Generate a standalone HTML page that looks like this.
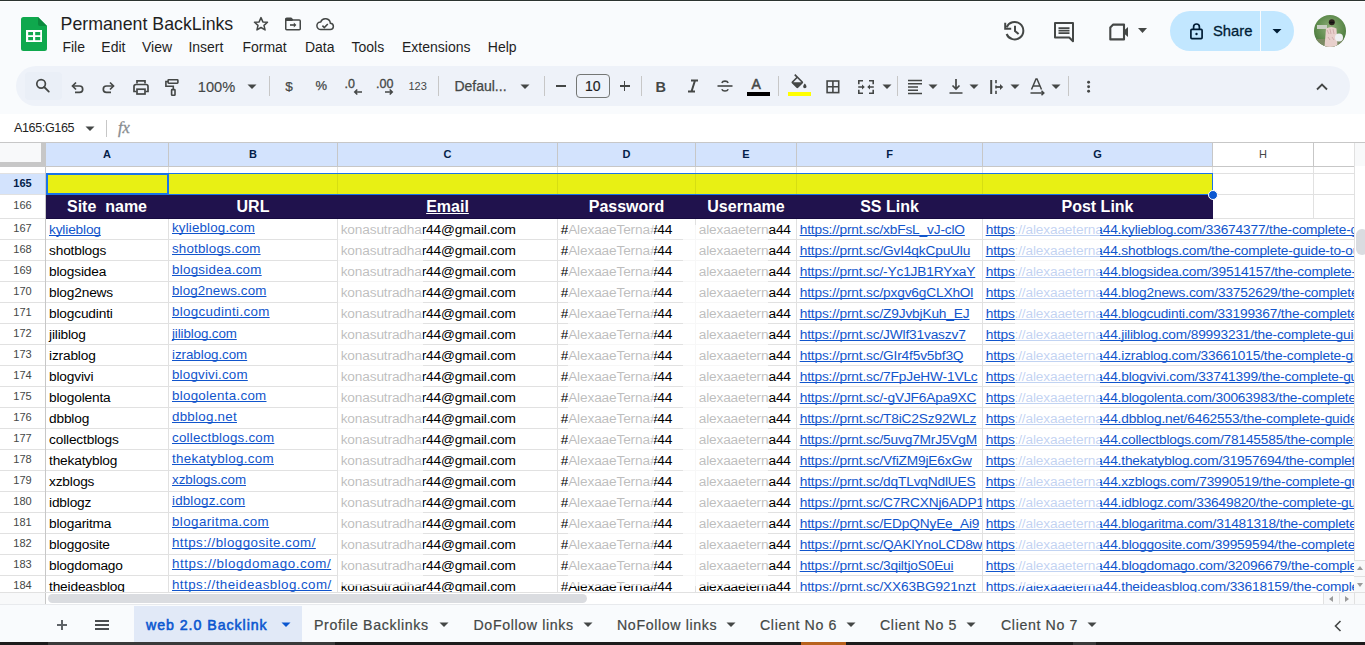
<!DOCTYPE html>
<html><head><meta charset="utf-8"><title>Permanent BackLinks</title><style>
*{margin:0;padding:0;box-sizing:border-box}
html,body{width:1365px;height:645px;overflow:hidden;background:#f9fbfd;font-family:"Liberation Sans",sans-serif;position:relative}
.a{position:absolute;white-space:nowrap}
svg.a{overflow:visible}
</style></head><body>
<div class="a" style="left:0px;top:0px;width:1365px;height:1px;background:#2c3431;"></div>
<div class="a" style="left:0px;top:1px;width:1365px;height:1px;background:#ffffff;"></div>
<svg class="a" style="left:21px;top:17px" width="26" height="34" viewBox="0 0 26 34"><path d="M2.5 0H17l9 9v22.5a2.5 2.5 0 0 1-2.5 2.5h-21A2.5 2.5 0 0 1 0 31.5v-29A2.5 2.5 0 0 1 2.5 0z" fill="#0fa84d"/>
<path d="M17 0l9 9h-7a2 2 0 0 1-2-2z" fill="#0b8a3e"/>
<rect x="5" y="13" width="16" height="12" fill="#fff"/>
<rect x="7.2" y="15" width="4.8" height="3.2" fill="#0fa84d"/><rect x="14.2" y="15" width="5" height="3.2" fill="#0fa84d"/>
<rect x="7.2" y="20" width="4.8" height="3.2" fill="#0fa84d"/><rect x="14.2" y="20" width="5" height="3.2" fill="#0fa84d"/></svg>
<div class="a" style="left:60.6px;top:12.85px;font-size:17.75px;line-height:22px;color:#1f1f1f;font-weight:normal;">Permanent BackLinks</div>
<svg class="a" style="left:253px;top:16px" width="16" height="16" viewBox="0 0 16 16"><path d="M8 1.6l1.85 4.3 4.65.4-3.5 3.05 1.05 4.55L8 11.5l-4.05 2.4L5 9.35 1.5 6.3l4.65-.4z" fill="none" stroke="#444746" stroke-width="1.5" stroke-linejoin="round"/></svg>
<svg class="a" style="left:284px;top:17px" width="18" height="14" viewBox="0 0 18 14"><path d="M1.75 2.2a1 1 0 0 1 1-1h4.2l1.7 1.7h6.6a1 1 0 0 1 1 1v7.9a1 1 0 0 1-1 1H2.75a1 1 0 0 1-1-1z" fill="none" stroke="#444746" stroke-width="1.5"/><path d="M1.75 1.2h5.2l1.7 1.7v1H1.75z" fill="#444746"/><path d="M6 8h4.5" stroke="#444746" stroke-width="1.6"/><path d="M9.8 5.6l2.6 2.4-2.6 2.4z" fill="#444746"/></svg>
<svg class="a" style="left:315px;top:17px" width="20" height="15" viewBox="0 0 20 15"><path d="M5.8 12.6h9.2a3.2 3.2 0 0 0 .35-6.4A5 5 0 0 0 5.7 4.9 3.85 3.85 0 0 0 5.8 12.6z" fill="none" stroke="#444746" stroke-width="1.5"/><path d="M7.4 8.6l1.9 1.9 3.5-3.5" fill="none" stroke="#444746" stroke-width="1.6"/></svg>
<div class="a" style="left:62.4px;top:37.65px;font-size:14px;line-height:18px;color:#1f1f1f;font-weight:normal;">File</div>
<div class="a" style="left:101.3px;top:37.65px;font-size:14px;line-height:18px;color:#1f1f1f;font-weight:normal;">Edit</div>
<div class="a" style="left:142px;top:37.65px;font-size:14px;line-height:18px;color:#1f1f1f;font-weight:normal;">View</div>
<div class="a" style="left:188.4px;top:37.65px;font-size:14px;line-height:18px;color:#1f1f1f;font-weight:normal;">Insert</div>
<div class="a" style="left:242.4px;top:37.65px;font-size:14px;line-height:18px;color:#1f1f1f;font-weight:normal;">Format</div>
<div class="a" style="left:304.9px;top:37.65px;font-size:14px;line-height:18px;color:#1f1f1f;font-weight:normal;">Data</div>
<div class="a" style="left:351.5px;top:37.65px;font-size:14px;line-height:18px;color:#1f1f1f;font-weight:normal;">Tools</div>
<div class="a" style="left:402px;top:37.65px;font-size:14px;line-height:18px;color:#1f1f1f;font-weight:normal;">Extensions</div>
<div class="a" style="left:487.8px;top:37.65px;font-size:14px;line-height:18px;color:#1f1f1f;font-weight:normal;">Help</div>
<svg class="a" style="left:1003px;top:19px" width="24" height="24" viewBox="0 0 24 24"><path d="M3.6 8.4A8.7 8.7 0 1 1 3.6 15" fill="none" stroke="#444746" stroke-width="2"/><path d="M2.2 3.8v6h6" fill="none" stroke="#444746" stroke-width="2"/><path d="M12 6.8v5.2l3.6 3" fill="none" stroke="#444746" stroke-width="2"/></svg>
<svg class="a" style="left:1052px;top:20px" width="24" height="24" viewBox="0 0 24 24"><path d="M3 3h18v14.5h-0v3.8l-3.8-3.8H3z" fill="none" stroke="#444746" stroke-width="2" stroke-linejoin="round"/><path d="M6.5 8.1h11M6.5 10.6h11M6.5 13.1h11" stroke="#444746" stroke-width="1.6"/></svg>
<svg class="a" style="left:1106px;top:20px" width="26" height="24" viewBox="0 0 26 24"><path d="M7.2 4.6h10.8v14.8H4.3V7.5z" fill="none" stroke="#444746" stroke-width="2.1" stroke-linejoin="round"/><path d="M18 10.5l4-3.5v10l-4-3.5z" fill="#444746"/></svg>
<svg class="a" style="left:1138px;top:28px" width="10" height="6" viewBox="0 0 10 6"><path d="M0 0h9L4.5 5z" fill="#444746"/></svg>
<div class="a" style="left:1170px;top:11px;width:124px;height:40px;background:#c2e7ff;border-radius:20px"></div>
<div class="a" style="left:1260px;top:11px;width:1px;height:40px;background:#f9fbfd;"></div>
<svg class="a" style="left:1187px;top:21px" width="20" height="20" viewBox="0 0 20 20"><rect x="3.9" y="8.4" width="11.2" height="9.2" rx="1" fill="none" stroke="#001d35" stroke-width="1.7"/><path d="M6.6 8.4V5.9a2.9 2.9 0 0 1 5.8 0v2.5" fill="none" stroke="#001d35" stroke-width="1.7"/><circle cx="9.5" cy="13" r="1.2" fill="#001d35"/></svg>
<div class="a" style="left:1213px;top:22.37px;font-size:14.8px;line-height:18px;color:#001d35;font-weight:normal;-webkit-text-stroke:0.3px #001d35">Share</div>
<svg class="a" style="left:1272px;top:29px" width="10" height="6" viewBox="0 0 10 6"><path d="M0.5 0h9L5 4.6z" fill="#001d35"/></svg>
<svg class="a" style="left:1314px;top:15px" width="32" height="32" viewBox="0 0 32 32"><defs><clipPath id="av"><circle cx="16" cy="16" r="16"/></clipPath><radialGradient id="avg" cx="0.5" cy="0.4" r="0.7"><stop offset="0" stop-color="#8fae7a"/><stop offset="0.6" stop-color="#5d8a4c"/><stop offset="1" stop-color="#3d6a35"/></radialGradient></defs><g clip-path="url(#av)"><rect width="32" height="32" fill="url(#avg)"/><rect x="3" y="10" width="10" height="4" fill="#c9cfc4"/><rect x="0" y="24" width="32" height="8" fill="#7b8a63"/><circle cx="17.8" cy="7.2" r="3" fill="#2b211c"/><rect x="15.8" y="6.8" width="4" height="1.4" fill="#111"/><path d="M12 13.5q5.5-3 10.5 0l1 18.5H10.5z" fill="#e8d0cc"/><path d="M13 15l2 4M16 14l1 5M19 14l1 5M14 22l2 3M18 22l2 3" stroke="#c9a3a3" stroke-width="0.8"/><circle cx="25" cy="22.5" r="4" fill="#eef1f3"/></g></svg>
<div class="a" style="left:16px;top:66px;width:1334px;height:40px;background:#eef2f9;border-radius:20px"></div>
<div class="a" style="left:25px;top:72px;width:37px;height:28px;background:#eaeff7;border-radius:4px"></div>
<svg class="a" style="left:33px;top:75px" width="20" height="20" viewBox="0 0 20 20"><circle cx="8.1" cy="8.85" r="4.3" fill="none" stroke="#444746" stroke-width="1.7"/><path d="M11.2 12l4.6 4.6" stroke="#444746" stroke-width="1.8" stroke-linecap="round"/></svg>
<svg class="a" style="left:67px;top:75px" width="20" height="20" viewBox="0 0 20 20"><path d="M6 11H12.5a3.2 3.2 0 0 1 0 6.4H8" fill="none" stroke="#444746" stroke-width="1.7"/><path d="M9 7.5L5.5 11 9 14.5" fill="none" stroke="#444746" stroke-width="1.7"/></svg>
<svg class="a" style="left:99px;top:75px" width="20" height="20" viewBox="0 0 20 20"><path d="M14 11H7.5a3.2 3.2 0 0 0 0 6.4H12" fill="none" stroke="#444746" stroke-width="1.7"/><path d="M11 7.5l3.5 3.5L11 14.5" fill="none" stroke="#444746" stroke-width="1.7"/></svg>
<svg class="a" style="left:131px;top:77px" width="20" height="20" viewBox="0 0 20 20"><path d="M6 6.5V3.8h8v2.7" fill="none" stroke="#444746" stroke-width="1.7"/><path d="M5.5 14.5H3V9.5a2 2 0 0 1 2-2h10a2 2 0 0 1 2 2v5h-2.5" fill="none" stroke="#444746" stroke-width="1.7"/><rect x="6" y="12.2" width="8" height="4.8" fill="none" stroke="#444746" stroke-width="1.7"/></svg>
<svg class="a" style="left:163px;top:77px" width="20" height="20" viewBox="0 0 20 20"><rect x="5.1" y="2.8" width="9.8" height="3.4" rx=".6" fill="none" stroke="#444746" stroke-width="1.6"/><path d="M5.1 4.5H2.9V9.3H10.3V12.6" fill="none" stroke="#444746" stroke-width="1.6"/><rect x="8.6" y="12.6" width="3.4" height="5.7" rx=".6" fill="none" stroke="#444746" stroke-width="1.6"/></svg>
<div class="a" style="left:197.8px;top:77.74px;font-size:14.6px;line-height:18px;color:#444746;font-weight:normal;-webkit-text-stroke:0.15px #444746">100%</div>
<svg class="a" style="left:247px;top:84px" width="10" height="6" viewBox="0 0 10 6"><path d="M0.5 0.5h9L5 5z" fill="#444746"/></svg>
<div class="a" style="left:269px;top:76px;width:1px;height:20px;background:#c7c7c7;"></div>
<div class="a" style="left:285.2px;top:77.79px;font-size:13.6px;line-height:17px;color:#444746;font-weight:normal;-webkit-text-stroke:0.2px #444746">$</div>
<div class="a" style="left:315.5px;top:77.50px;font-size:13px;line-height:16px;color:#444746;font-weight:normal;-webkit-text-stroke:0.25px #444746">%</div>
<div class="a" style="left:344.5px;top:75.67px;font-size:12.5px;line-height:16px;color:#444746;font-weight:normal;-webkit-text-stroke:0.3px #444746">.0</div>
<svg class="a" style="left:352.5px;top:88px" width="10" height="8" viewBox="0 0 10 8"><path d="M9 4H1.8M4.3 1.5L1.8 4l2.5 2.5" fill="none" stroke="#444746" stroke-width="1.6"/></svg>
<div class="a" style="left:376px;top:75.67px;font-size:12.5px;line-height:16px;color:#444746;font-weight:normal;-webkit-text-stroke:0.3px #444746">.00</div>
<svg class="a" style="left:383.6px;top:88px" width="10" height="8" viewBox="0 0 10 8"><path d="M1 4h7.2M5.7 1.5L8.2 4 5.7 6.5" fill="none" stroke="#444746" stroke-width="1.6"/></svg>
<div class="a" style="left:408.5px;top:78.99px;font-size:11px;line-height:14px;color:#444746;font-weight:normal;">123</div>
<div class="a" style="left:438px;top:76px;width:1px;height:20px;background:#c7c7c7;"></div>
<div class="a" style="left:454.4px;top:76.65px;font-size:14px;line-height:18px;color:#444746;font-weight:normal;-webkit-text-stroke:0.25px #444746">Defaul...</div>
<svg class="a" style="left:520px;top:84px" width="10" height="6" viewBox="0 0 10 6"><path d="M0.5 0.5h9L5 5z" fill="#444746"/></svg>
<div class="a" style="left:544px;top:76px;width:1px;height:20px;background:#c7c7c7;"></div>
<div class="a" style="left:556px;top:85.2px;width:10px;height:1.7px;background:#444746;"></div>
<div class="a" style="left:576px;top:74px;width:34px;height:24px;background:transparent;border:1px solid #747775;border-radius:4px"></div>
<div class="a" style="left:585px;top:77.15px;font-size:14px;line-height:18px;color:#1f1f1f;font-weight:normal;-webkit-text-stroke:0.2px #1f1f1f">10</div>
<div class="a" style="left:619.5px;top:85.2px;width:10px;height:1.7px;background:#444746;"></div>
<div class="a" style="left:623.65px;top:81px;width:1.7px;height:10px;background:#444746;"></div>
<div class="a" style="left:641px;top:76px;width:1px;height:20px;background:#c7c7c7;"></div>
<div class="a" style="left:655.5px;top:77.98px;font-size:14.5px;line-height:18px;color:#444746;font-weight:bold;">B</div>
<svg class="a" style="left:683px;top:76px" width="20" height="20" viewBox="0 0 20 20"><path d="M8 4.5h7M5 15.5h7M12 4.5L8.5 15.5" fill="none" stroke="#444746" stroke-width="2"/></svg>
<svg class="a" style="left:715px;top:76px" width="20" height="20" viewBox="0 0 20 20"><path d="M2.5 10h15" stroke="#444746" stroke-width="1.6"/><path d="M13.2 6.8A3.4 2.6 0 0 0 6.8 6.8M6.8 13.2a3.4 2.8 0 0 0 6.4 0" fill="none" stroke="#444746" stroke-width="1.6"/></svg>
<div class="a" style="left:751.5px;top:74.65px;font-size:14px;line-height:18px;color:#444746;font-weight:normal;-webkit-text-stroke:0.5px #444746">A</div>
<div class="a" style="left:747px;top:92px;width:23px;height:4px;background:#000000;"></div>
<div class="a" style="left:778px;top:76px;width:1px;height:20px;background:#c7c7c7;"></div>
<svg class="a" style="left:788.5px;top:74px" width="20" height="20" viewBox="0 0 24 24"><path fill-rule="evenodd" d="M16.56 8.94L7.62 0 6.21 1.41l2.38 2.38-5.15 5.15c-.59.59-.59 1.54 0 2.12l5.5 5.5c.29.29.68.44 1.06.44s.77-.15 1.06-.44l5.5-5.5c.59-.58.59-1.53 0-2.12zM5.21 10L10 5.21 14.79 10H5.21zM19 11.5s-2 2.17-2 3.5c0 1.1.9 2 2 2s2-.9 2-2c0-1.33-2-3.5-2-3.5z" fill="#444746"/></svg>
<div class="a" style="left:788px;top:92px;width:23px;height:4px;background:#ffff00;"></div>
<svg class="a" style="left:823px;top:76px" width="20" height="20" viewBox="0 0 20 20"><rect x="4.1" y="5" width="11.6" height="11.6" fill="none" stroke="#444746" stroke-width="1.6"/><path d="M9.9 5v11.6M4.1 10.8h11.6" stroke="#444746" stroke-width="1.6"/></svg>
<svg class="a" style="left:856px;top:76px" width="20" height="20" viewBox="0 0 20 20"><path d="M7 4.8H2.8V8.2M2.8 13.8v3.4H7M13 4.8h4.2V8.2M17.2 13.8v3.4H13" fill="none" stroke="#444746" stroke-width="1.6"/><path d="M2.2 11h4.2M13.6 11h4.2" stroke="#444746" stroke-width="1.6"/><path d="M6 8.4l2.8 2.6L6 13.6zM14 8.4l-2.8 2.6 2.8 2.6z" fill="#444746"/></svg>
<svg class="a" style="left:882px;top:84px" width="10" height="6" viewBox="0 0 10 6"><path d="M0.5 0.5h9L5 5z" fill="#444746"/></svg>
<div class="a" style="left:897px;top:76px;width:1px;height:20px;background:#c7c7c7;"></div>
<svg class="a" style="left:906px;top:76px" width="20" height="20" viewBox="0 0 20 20"><path d="M2 4.5h14M2 7.75h14M2 11h10M2 14.25h10M2 17.5h14" stroke="#444746" stroke-width="1.5"/></svg>
<svg class="a" style="left:928px;top:84px" width="10" height="6" viewBox="0 0 10 6"><path d="M0.5 0.5h9L5 5z" fill="#444746"/></svg>
<svg class="a" style="left:946px;top:76px" width="20" height="20" viewBox="0 0 20 20"><path d="M10 3v10M6.5 9.5l3.5 3.5 3.5-3.5M3.5 17h13" fill="none" stroke="#444746" stroke-width="1.7"/></svg>
<svg class="a" style="left:969px;top:84px" width="10" height="6" viewBox="0 0 10 6"><path d="M0.5 0.5h9L5 5z" fill="#444746"/></svg>
<svg class="a" style="left:986px;top:76px" width="20" height="20" viewBox="0 0 20 20"><path d="M5.2 4v14" stroke="#444746" stroke-width="2"/><path d="M10 4v3.2M10 9.4v3.2M10 14.8v3.2" stroke="#444746" stroke-width="1.6"/><path d="M10 11h5" stroke="#444746" stroke-width="1.8"/><path d="M14 8l3.2 3-3.2 3z" fill="#444746"/></svg>
<svg class="a" style="left:1010px;top:84px" width="10" height="6" viewBox="0 0 10 6"><path d="M0.5 0.5h9L5 5z" fill="#444746"/></svg>
<svg class="a" style="left:1028px;top:76px" width="20" height="20" viewBox="0 0 20 20"><path d="M3.5 13.5L8 3h1l4.5 10.5M5 10h7" fill="none" stroke="#444746" stroke-width="1.5"/><path d="M2.5 17h13M13.5 14.8l2.3 2.2-2.3 2.2" fill="none" stroke="#444746" stroke-width="1.5"/></svg>
<svg class="a" style="left:1051px;top:84px" width="10" height="6" viewBox="0 0 10 6"><path d="M0.5 0.5h9L5 5z" fill="#444746"/></svg>
<div class="a" style="left:1068px;top:76px;width:1px;height:20px;background:#c7c7c7;"></div>
<svg class="a" style="left:1084px;top:78px" width="10" height="18" viewBox="0 0 10 18"><circle cx="4.6" cy="4.3" r="1.45" fill="#444746"/><circle cx="4.6" cy="8.8" r="1.45" fill="#444746"/><circle cx="4.6" cy="13.3" r="1.45" fill="#444746"/></svg>
<svg class="a" style="left:1312px;top:77px" width="20" height="20" viewBox="0 0 20 20"><path d="M5 12.5l5-5 5 5" fill="none" stroke="#444746" stroke-width="1.8"/></svg>
<div class="a" style="left:0px;top:114px;width:1365px;height:28px;background:#ffffff;"></div>
<div class="a" style="left:14px;top:119.63px;font-size:12.6px;line-height:16px;color:#1f1f1f;font-weight:normal;letter-spacing:-0.4px;">A165:G165</div>
<svg class="a" style="left:85px;top:125.5px" width="10" height="6" viewBox="0 0 10 6"><path d="M0.5 0.5h9L5 5z" fill="#444746"/></svg>
<div class="a" style="left:106px;top:120px;width:1px;height:17px;background:#c7c7c7;"></div>
<div class="a" style="left:118px;top:116.78px;font-size:16.5px;line-height:21px;color:#888c90;font-weight:normal;font-family:'Liberation Serif',serif;-webkit-text-stroke:0.3px #888c90"><i>fx</i></div>
<div class="a" style="left:0px;top:142px;width:1365px;height:462px;background:#ffffff;"></div>
<div class="a" style="left:0px;top:142px;width:1365px;height:1px;background:#c7c7c7;"></div>
<div class="a" style="left:46px;top:143px;width:1166px;height:23px;background:#d3e3fd;"></div>
<div class="a" style="left:1354px;top:143px;width:11px;height:23px;background:#f8f9fa;"></div>
<div class="a" style="left:1354px;top:143px;width:1px;height:23px;background:#e1e1e1;"></div>
<div class="a" style="left:0px;top:166px;width:1354px;height:1px;background:#c7c7c7;"></div>
<div class="a" style="left:0px;top:143px;width:41px;height:19px;background:#f8f9fa;"></div>
<div class="a" style="left:41px;top:143px;width:5px;height:23px;background:#c7c7c7;"></div>
<div class="a" style="left:0px;top:162px;width:45px;height:4px;background:#c7c7c7;"></div>
<div class="a" style="left:168px;top:143px;width:1px;height:23px;background:#c7c7c7;"></div>
<div class="a" style="left:337px;top:143px;width:1px;height:23px;background:#c7c7c7;"></div>
<div class="a" style="left:557px;top:143px;width:1px;height:23px;background:#c7c7c7;"></div>
<div class="a" style="left:695px;top:143px;width:1px;height:23px;background:#c7c7c7;"></div>
<div class="a" style="left:796px;top:143px;width:1px;height:23px;background:#c7c7c7;"></div>
<div class="a" style="left:982px;top:143px;width:1px;height:23px;background:#c7c7c7;"></div>
<div class="a" style="left:1212px;top:143px;width:1px;height:23px;background:#c7c7c7;"></div>
<div class="a" style="left:1313px;top:143px;width:1px;height:23px;background:#c7c7c7;"></div>
<div class="a" style="left:46px;top:147px;width:122px;text-align:center;font-size:11px;line-height:14px;color:#041e49;font-weight:bold">A</div>
<div class="a" style="left:169px;top:147px;width:168px;text-align:center;font-size:11px;line-height:14px;color:#041e49;font-weight:bold">B</div>
<div class="a" style="left:338px;top:147px;width:219px;text-align:center;font-size:11px;line-height:14px;color:#041e49;font-weight:bold">C</div>
<div class="a" style="left:558px;top:147px;width:137px;text-align:center;font-size:11px;line-height:14px;color:#041e49;font-weight:bold">D</div>
<div class="a" style="left:696px;top:147px;width:100px;text-align:center;font-size:11px;line-height:14px;color:#041e49;font-weight:bold">E</div>
<div class="a" style="left:797px;top:147px;width:185px;text-align:center;font-size:11px;line-height:14px;color:#041e49;font-weight:bold">F</div>
<div class="a" style="left:983px;top:147px;width:229px;text-align:center;font-size:11px;line-height:14px;color:#041e49;font-weight:bold">G</div>
<div class="a" style="left:1213px;top:147px;width:100px;text-align:center;font-size:11px;line-height:14px;color:#444746;font-weight:normal">H</div>
<div class="a" style="left:45px;top:166px;width:1px;height:426px;background:#c7c7c7;"></div>
<div class="a" style="left:0px;top:173px;width:45px;height:1px;background:#e1e1e1;"></div>
<div class="a" style="left:46px;top:173px;width:1308px;height:1px;background:#e1e1e1;"></div>
<div class="a" style="left:0px;top:194px;width:45px;height:1px;background:#e1e1e1;"></div>
<div class="a" style="left:46px;top:194px;width:1308px;height:1px;background:#e1e1e1;"></div>
<div class="a" style="left:0px;top:218px;width:45px;height:1px;background:#e1e1e1;"></div>
<div class="a" style="left:46px;top:218px;width:1308px;height:1px;background:#e1e1e1;"></div>
<div class="a" style="left:0px;top:239px;width:45px;height:1px;background:#e1e1e1;"></div>
<div class="a" style="left:46px;top:239px;width:1308px;height:1px;background:#e1e1e1;"></div>
<div class="a" style="left:0px;top:260px;width:45px;height:1px;background:#e1e1e1;"></div>
<div class="a" style="left:46px;top:260px;width:1308px;height:1px;background:#e1e1e1;"></div>
<div class="a" style="left:0px;top:281px;width:45px;height:1px;background:#e1e1e1;"></div>
<div class="a" style="left:46px;top:281px;width:1308px;height:1px;background:#e1e1e1;"></div>
<div class="a" style="left:0px;top:302px;width:45px;height:1px;background:#e1e1e1;"></div>
<div class="a" style="left:46px;top:302px;width:1308px;height:1px;background:#e1e1e1;"></div>
<div class="a" style="left:0px;top:323px;width:45px;height:1px;background:#e1e1e1;"></div>
<div class="a" style="left:46px;top:323px;width:1308px;height:1px;background:#e1e1e1;"></div>
<div class="a" style="left:0px;top:344px;width:45px;height:1px;background:#e1e1e1;"></div>
<div class="a" style="left:46px;top:344px;width:1308px;height:1px;background:#e1e1e1;"></div>
<div class="a" style="left:0px;top:365px;width:45px;height:1px;background:#e1e1e1;"></div>
<div class="a" style="left:46px;top:365px;width:1308px;height:1px;background:#e1e1e1;"></div>
<div class="a" style="left:0px;top:386px;width:45px;height:1px;background:#e1e1e1;"></div>
<div class="a" style="left:46px;top:386px;width:1308px;height:1px;background:#e1e1e1;"></div>
<div class="a" style="left:0px;top:407px;width:45px;height:1px;background:#e1e1e1;"></div>
<div class="a" style="left:46px;top:407px;width:1308px;height:1px;background:#e1e1e1;"></div>
<div class="a" style="left:0px;top:428px;width:45px;height:1px;background:#e1e1e1;"></div>
<div class="a" style="left:46px;top:428px;width:1308px;height:1px;background:#e1e1e1;"></div>
<div class="a" style="left:0px;top:449px;width:45px;height:1px;background:#e1e1e1;"></div>
<div class="a" style="left:46px;top:449px;width:1308px;height:1px;background:#e1e1e1;"></div>
<div class="a" style="left:0px;top:470px;width:45px;height:1px;background:#e1e1e1;"></div>
<div class="a" style="left:46px;top:470px;width:1308px;height:1px;background:#e1e1e1;"></div>
<div class="a" style="left:0px;top:491px;width:45px;height:1px;background:#e1e1e1;"></div>
<div class="a" style="left:46px;top:491px;width:1308px;height:1px;background:#e1e1e1;"></div>
<div class="a" style="left:0px;top:512px;width:45px;height:1px;background:#e1e1e1;"></div>
<div class="a" style="left:46px;top:512px;width:1308px;height:1px;background:#e1e1e1;"></div>
<div class="a" style="left:0px;top:533px;width:45px;height:1px;background:#e1e1e1;"></div>
<div class="a" style="left:46px;top:533px;width:1308px;height:1px;background:#e1e1e1;"></div>
<div class="a" style="left:0px;top:554px;width:45px;height:1px;background:#e1e1e1;"></div>
<div class="a" style="left:46px;top:554px;width:1308px;height:1px;background:#e1e1e1;"></div>
<div class="a" style="left:0px;top:575px;width:45px;height:1px;background:#e1e1e1;"></div>
<div class="a" style="left:46px;top:575px;width:1308px;height:1px;background:#e1e1e1;"></div>
<div class="a" style="left:168px;top:167px;width:1px;height:425px;background:#e1e1e1;"></div>
<div class="a" style="left:337px;top:167px;width:1px;height:425px;background:#e1e1e1;"></div>
<div class="a" style="left:557px;top:167px;width:1px;height:425px;background:#e1e1e1;"></div>
<div class="a" style="left:695px;top:167px;width:1px;height:425px;background:#e1e1e1;"></div>
<div class="a" style="left:796px;top:167px;width:1px;height:425px;background:#e1e1e1;"></div>
<div class="a" style="left:982px;top:167px;width:1px;height:425px;background:#e1e1e1;"></div>
<div class="a" style="left:1212px;top:167px;width:1px;height:52px;background:#e1e1e1;"></div>
<div class="a" style="left:1313px;top:167px;width:1px;height:52px;background:#e1e1e1;"></div>
<div class="a" style="left:1354px;top:166px;width:1px;height:426px;background:#e1e1e1;"></div>
<div class="a" style="left:1355px;top:166px;width:10px;height:438px;background:#ffffff;"></div>
<div class="a" style="left:1356px;top:229px;width:12px;height:26px;background:#dadce0;border-radius:6px"></div>
<div class="a" style="left:0px;top:174px;width:45px;height:20px;background:#d3e3fd;"></div>
<div class="a" style="left:0;top:173.4px;width:45px;height:20px;line-height:20px;text-align:center;font-size:11px;color:#041e49;font-weight:bold">165</div>
<div class="a" style="left:0;top:194.4px;width:45px;height:23px;line-height:23px;text-align:center;font-size:11px;color:#444746;font-weight:normal">166</div>
<div class="a" style="left:0;top:218.4px;width:45px;height:20px;line-height:20px;text-align:center;font-size:11px;color:#444746;font-weight:normal">167</div>
<div class="a" style="left:0;top:239.4px;width:45px;height:20px;line-height:20px;text-align:center;font-size:11px;color:#444746;font-weight:normal">168</div>
<div class="a" style="left:0;top:260.4px;width:45px;height:20px;line-height:20px;text-align:center;font-size:11px;color:#444746;font-weight:normal">169</div>
<div class="a" style="left:0;top:281.4px;width:45px;height:20px;line-height:20px;text-align:center;font-size:11px;color:#444746;font-weight:normal">170</div>
<div class="a" style="left:0;top:302.4px;width:45px;height:20px;line-height:20px;text-align:center;font-size:11px;color:#444746;font-weight:normal">171</div>
<div class="a" style="left:0;top:323.4px;width:45px;height:20px;line-height:20px;text-align:center;font-size:11px;color:#444746;font-weight:normal">172</div>
<div class="a" style="left:0;top:344.4px;width:45px;height:20px;line-height:20px;text-align:center;font-size:11px;color:#444746;font-weight:normal">173</div>
<div class="a" style="left:0;top:365.4px;width:45px;height:20px;line-height:20px;text-align:center;font-size:11px;color:#444746;font-weight:normal">174</div>
<div class="a" style="left:0;top:386.4px;width:45px;height:20px;line-height:20px;text-align:center;font-size:11px;color:#444746;font-weight:normal">175</div>
<div class="a" style="left:0;top:407.4px;width:45px;height:20px;line-height:20px;text-align:center;font-size:11px;color:#444746;font-weight:normal">176</div>
<div class="a" style="left:0;top:428.4px;width:45px;height:20px;line-height:20px;text-align:center;font-size:11px;color:#444746;font-weight:normal">177</div>
<div class="a" style="left:0;top:449.4px;width:45px;height:20px;line-height:20px;text-align:center;font-size:11px;color:#444746;font-weight:normal">178</div>
<div class="a" style="left:0;top:470.4px;width:45px;height:20px;line-height:20px;text-align:center;font-size:11px;color:#444746;font-weight:normal">179</div>
<div class="a" style="left:0;top:491.4px;width:45px;height:20px;line-height:20px;text-align:center;font-size:11px;color:#444746;font-weight:normal">180</div>
<div class="a" style="left:0;top:512.4px;width:45px;height:20px;line-height:20px;text-align:center;font-size:11px;color:#444746;font-weight:normal">181</div>
<div class="a" style="left:0;top:533.4px;width:45px;height:20px;line-height:20px;text-align:center;font-size:11px;color:#444746;font-weight:normal">182</div>
<div class="a" style="left:0;top:554.4px;width:45px;height:20px;line-height:20px;text-align:center;font-size:11px;color:#444746;font-weight:normal">183</div>
<div class="a" style="left:0;top:575.4px;width:45px;height:20px;line-height:20px;text-align:center;font-size:11px;color:#444746;font-weight:normal">184</div>
<div class="a" style="left:46px;top:174px;width:1166px;height:20px;background:#e8f014;"></div>
<div class="a" style="left:168px;top:174px;width:1px;height:20px;background:#d6de12;"></div>
<div class="a" style="left:337px;top:174px;width:1px;height:20px;background:#d6de12;"></div>
<div class="a" style="left:557px;top:174px;width:1px;height:20px;background:#d6de12;"></div>
<div class="a" style="left:695px;top:174px;width:1px;height:20px;background:#d6de12;"></div>
<div class="a" style="left:796px;top:174px;width:1px;height:20px;background:#d6de12;"></div>
<div class="a" style="left:982px;top:174px;width:1px;height:20px;background:#d6de12;"></div>
<div class="a" style="left:46px;top:194px;width:1167px;height:25px;background:#20124d;"></div>
<div class="a" style="left:46px;top:218px;width:1167px;height:1px;background:#170b40;"></div>
<div class="a" style="left:46px;top:197px;width:122px;text-align:center;font-size:16px;line-height:20px;color:#fff;font-weight:bold">Site&nbsp; name</div>
<div class="a" style="left:169px;top:197px;width:168px;text-align:center;font-size:16px;line-height:20px;color:#fff;font-weight:bold">URL</div>
<div class="a" style="left:338px;top:197px;width:219px;text-align:center;font-size:16px;line-height:20px;color:#fff;font-weight:bold"><u>Email</u></div>
<div class="a" style="left:558px;top:197px;width:137px;text-align:center;font-size:16px;line-height:20px;color:#fff;font-weight:bold">Password</div>
<div class="a" style="left:696px;top:197px;width:100px;text-align:center;font-size:16px;line-height:20px;color:#fff;font-weight:bold">Username</div>
<div class="a" style="left:797px;top:197px;width:185px;text-align:center;font-size:16px;line-height:20px;color:#fff;font-weight:bold">SS Link</div>
<div class="a" style="left:983px;top:197px;width:229px;text-align:center;font-size:16px;line-height:20px;color:#fff;font-weight:bold">Post Link</div>
<div class="a" style="left:46px;top:173px;width:1167px;height:22px;background:transparent;border:1px solid #1a73e8"></div>
<div class="a" style="left:46px;top:173px;width:123px;height:22px;background:transparent;border:2px solid #1a73e8"></div>
<div class="a" style="left:1208px;top:190px;width:10px;height:10px;border-radius:50%;background:#0b57d0;border:1px solid #fff"></div>
<div class="a" style="left:46px;top:219px;width:122px;height:20px;overflow:hidden"><div class="a" style="left:3px;top:0.5px;font-size:13.7px;letter-spacing:-0.16px;line-height:20px;color:#1155cc;text-decoration-skip-ink:none;text-decoration:underline">kylieblog</div></div>
<div class="a" style="left:168px;top:219px;width:169px;height:21px;overflow:hidden"><div class="a" style="left:4px;top:-1.3px;font-size:13.33px;line-height:20px;color:#1155cc;text-decoration:underline;text-decoration-skip-ink:none;letter-spacing:0.171px">kylieblog.com</div></div>
<div class="a" style="left:337px;top:219px;width:220px;height:20px;overflow:hidden"><div class="a" style="left:3.7px;top:0.5px;font-size:13.7px;letter-spacing:-0.16px;line-height:20px;color:#000;text-decoration-skip-ink:none;">konasutradhar44@gmail.com</div></div>
<div class="a" style="left:557px;top:219px;width:138px;height:20px;overflow:hidden"><div class="a" style="left:3.7px;top:0.5px;font-size:13.7px;letter-spacing:-0.16px;line-height:20px;color:#000;text-decoration-skip-ink:none;">#AlexaaeTerna#44</div></div>
<div class="a" style="left:695px;top:219px;width:101px;height:20px;overflow:hidden"><div class="a" style="left:3.7px;top:0.5px;font-size:13.7px;letter-spacing:-0.16px;line-height:20px;color:#000;text-decoration-skip-ink:none;">alexaaeterna44</div></div>
<div class="a" style="left:796px;top:219px;width:186px;height:20px;overflow:hidden"><div class="a" style="left:3.7px;top:0.5px;font-size:13.7px;letter-spacing:-0.16px;line-height:20px;color:#1155cc;text-decoration-skip-ink:none;text-decoration:underline">https://prnt.sc/xbFsL_vJ-clO</div></div>
<div class="a" style="left:982px;top:219px;width:372px;height:20px;overflow:hidden"><div class="a" style="left:3.7px;top:0.5px;font-size:13.7px;letter-spacing:-0.16px;line-height:20px;color:#1155cc;text-decoration-skip-ink:none;text-decoration:underline">https://alexaaeterna44.kylieblog.com/33674377/the-complete-guide-to</div></div>
<div class="a" style="left:46px;top:240px;width:122px;height:20px;overflow:hidden"><div class="a" style="left:3px;top:0.5px;font-size:13.7px;letter-spacing:-0.16px;line-height:20px;color:#000;text-decoration-skip-ink:none;">shotblogs</div></div>
<div class="a" style="left:168px;top:240px;width:169px;height:21px;overflow:hidden"><div class="a" style="left:4px;top:-1.3px;font-size:13.33px;line-height:20px;color:#1155cc;text-decoration:underline;text-decoration-skip-ink:none;letter-spacing:0.204px">shotblogs.com</div></div>
<div class="a" style="left:337px;top:240px;width:220px;height:20px;overflow:hidden"><div class="a" style="left:3.7px;top:0.5px;font-size:13.7px;letter-spacing:-0.16px;line-height:20px;color:#000;text-decoration-skip-ink:none;">konasutradhar44@gmail.com</div></div>
<div class="a" style="left:557px;top:240px;width:138px;height:20px;overflow:hidden"><div class="a" style="left:3.7px;top:0.5px;font-size:13.7px;letter-spacing:-0.16px;line-height:20px;color:#000;text-decoration-skip-ink:none;">#AlexaaeTerna#44</div></div>
<div class="a" style="left:695px;top:240px;width:101px;height:20px;overflow:hidden"><div class="a" style="left:3.7px;top:0.5px;font-size:13.7px;letter-spacing:-0.16px;line-height:20px;color:#000;text-decoration-skip-ink:none;">alexaaeterna44</div></div>
<div class="a" style="left:796px;top:240px;width:186px;height:20px;overflow:hidden"><div class="a" style="left:3.7px;top:0.5px;font-size:13.7px;letter-spacing:-0.16px;line-height:20px;color:#1155cc;text-decoration-skip-ink:none;text-decoration:underline">https://prnt.sc/GvI4qkCpuUlu</div></div>
<div class="a" style="left:982px;top:240px;width:372px;height:20px;overflow:hidden"><div class="a" style="left:3.7px;top:0.5px;font-size:13.7px;letter-spacing:-0.16px;line-height:20px;color:#1155cc;text-decoration-skip-ink:none;text-decoration:underline">https://alexaaeterna44.shotblogs.com/the-complete-guide-to-our</div></div>
<div class="a" style="left:46px;top:261px;width:122px;height:20px;overflow:hidden"><div class="a" style="left:3px;top:0.5px;font-size:13.7px;letter-spacing:-0.16px;line-height:20px;color:#000;text-decoration-skip-ink:none;">blogsidea</div></div>
<div class="a" style="left:168px;top:261px;width:169px;height:21px;overflow:hidden"><div class="a" style="left:4px;top:-1.3px;font-size:13.33px;line-height:20px;color:#1155cc;text-decoration:underline;text-decoration-skip-ink:none;letter-spacing:0.287px">blogsidea.com</div></div>
<div class="a" style="left:337px;top:261px;width:220px;height:20px;overflow:hidden"><div class="a" style="left:3.7px;top:0.5px;font-size:13.7px;letter-spacing:-0.16px;line-height:20px;color:#000;text-decoration-skip-ink:none;">konasutradhar44@gmail.com</div></div>
<div class="a" style="left:557px;top:261px;width:138px;height:20px;overflow:hidden"><div class="a" style="left:3.7px;top:0.5px;font-size:13.7px;letter-spacing:-0.16px;line-height:20px;color:#000;text-decoration-skip-ink:none;">#AlexaaeTerna#44</div></div>
<div class="a" style="left:695px;top:261px;width:101px;height:20px;overflow:hidden"><div class="a" style="left:3.7px;top:0.5px;font-size:13.7px;letter-spacing:-0.16px;line-height:20px;color:#000;text-decoration-skip-ink:none;">alexaaeterna44</div></div>
<div class="a" style="left:796px;top:261px;width:186px;height:20px;overflow:hidden"><div class="a" style="left:3.7px;top:0.5px;font-size:13.7px;letter-spacing:-0.16px;line-height:20px;color:#1155cc;text-decoration-skip-ink:none;text-decoration:underline">https://prnt.sc/-Yc1JB1RYxaY</div></div>
<div class="a" style="left:982px;top:261px;width:372px;height:20px;overflow:hidden"><div class="a" style="left:3.7px;top:0.5px;font-size:13.7px;letter-spacing:-0.16px;line-height:20px;color:#1155cc;text-decoration-skip-ink:none;text-decoration:underline">https://alexaaeterna44.blogsidea.com/39514157/the-complete-guide</div></div>
<div class="a" style="left:46px;top:282px;width:122px;height:20px;overflow:hidden"><div class="a" style="left:3px;top:0.5px;font-size:13.7px;letter-spacing:-0.16px;line-height:20px;color:#000;text-decoration-skip-ink:none;">blog2news</div></div>
<div class="a" style="left:168px;top:282px;width:169px;height:21px;overflow:hidden"><div class="a" style="left:4px;top:-1.3px;font-size:13.33px;line-height:20px;color:#1155cc;text-decoration:underline;text-decoration-skip-ink:none;letter-spacing:0.14px">blog2news.com</div></div>
<div class="a" style="left:337px;top:282px;width:220px;height:20px;overflow:hidden"><div class="a" style="left:3.7px;top:0.5px;font-size:13.7px;letter-spacing:-0.16px;line-height:20px;color:#000;text-decoration-skip-ink:none;">konasutradhar44@gmail.com</div></div>
<div class="a" style="left:557px;top:282px;width:138px;height:20px;overflow:hidden"><div class="a" style="left:3.7px;top:0.5px;font-size:13.7px;letter-spacing:-0.16px;line-height:20px;color:#000;text-decoration-skip-ink:none;">#AlexaaeTerna#44</div></div>
<div class="a" style="left:695px;top:282px;width:101px;height:20px;overflow:hidden"><div class="a" style="left:3.7px;top:0.5px;font-size:13.7px;letter-spacing:-0.16px;line-height:20px;color:#000;text-decoration-skip-ink:none;">alexaaeterna44</div></div>
<div class="a" style="left:796px;top:282px;width:186px;height:20px;overflow:hidden"><div class="a" style="left:3.7px;top:0.5px;font-size:13.7px;letter-spacing:-0.16px;line-height:20px;color:#1155cc;text-decoration-skip-ink:none;text-decoration:underline">https://prnt.sc/pxgv6gCLXhOl</div></div>
<div class="a" style="left:982px;top:282px;width:372px;height:20px;overflow:hidden"><div class="a" style="left:3.7px;top:0.5px;font-size:13.7px;letter-spacing:-0.16px;line-height:20px;color:#1155cc;text-decoration-skip-ink:none;text-decoration:underline">https://alexaaeterna44.blog2news.com/33752629/the-complete-guide</div></div>
<div class="a" style="left:46px;top:303px;width:122px;height:20px;overflow:hidden"><div class="a" style="left:3px;top:0.5px;font-size:13.7px;letter-spacing:-0.16px;line-height:20px;color:#000;text-decoration-skip-ink:none;">blogcudinti</div></div>
<div class="a" style="left:168px;top:303px;width:169px;height:21px;overflow:hidden"><div class="a" style="left:4px;top:-1.3px;font-size:13.33px;line-height:20px;color:#1155cc;text-decoration:underline;text-decoration-skip-ink:none;letter-spacing:0.335px">blogcudinti.com</div></div>
<div class="a" style="left:337px;top:303px;width:220px;height:20px;overflow:hidden"><div class="a" style="left:3.7px;top:0.5px;font-size:13.7px;letter-spacing:-0.16px;line-height:20px;color:#000;text-decoration-skip-ink:none;">konasutradhar44@gmail.com</div></div>
<div class="a" style="left:557px;top:303px;width:138px;height:20px;overflow:hidden"><div class="a" style="left:3.7px;top:0.5px;font-size:13.7px;letter-spacing:-0.16px;line-height:20px;color:#000;text-decoration-skip-ink:none;">#AlexaaeTerna#44</div></div>
<div class="a" style="left:695px;top:303px;width:101px;height:20px;overflow:hidden"><div class="a" style="left:3.7px;top:0.5px;font-size:13.7px;letter-spacing:-0.16px;line-height:20px;color:#000;text-decoration-skip-ink:none;">alexaaeterna44</div></div>
<div class="a" style="left:796px;top:303px;width:186px;height:20px;overflow:hidden"><div class="a" style="left:3.7px;top:0.5px;font-size:13.7px;letter-spacing:-0.16px;line-height:20px;color:#1155cc;text-decoration-skip-ink:none;text-decoration:underline">https://prnt.sc/Z9JvbjKuh_EJ</div></div>
<div class="a" style="left:982px;top:303px;width:372px;height:20px;overflow:hidden"><div class="a" style="left:3.7px;top:0.5px;font-size:13.7px;letter-spacing:-0.16px;line-height:20px;color:#1155cc;text-decoration-skip-ink:none;text-decoration:underline">https://alexaaeterna44.blogcudinti.com/33199367/the-complete-guide</div></div>
<div class="a" style="left:46px;top:324px;width:122px;height:20px;overflow:hidden"><div class="a" style="left:3px;top:0.5px;font-size:13.7px;letter-spacing:-0.16px;line-height:20px;color:#000;text-decoration-skip-ink:none;">jiliblog</div></div>
<div class="a" style="left:168px;top:324px;width:169px;height:21px;overflow:hidden"><div class="a" style="left:4px;top:0.3999999999999999px;font-size:13.33px;line-height:20px;color:#1155cc;text-decoration:underline;text-decoration-skip-ink:none;letter-spacing:-0.097px">jiliblog.com</div></div>
<div class="a" style="left:337px;top:324px;width:220px;height:20px;overflow:hidden"><div class="a" style="left:3.7px;top:0.5px;font-size:13.7px;letter-spacing:-0.16px;line-height:20px;color:#000;text-decoration-skip-ink:none;">konasutradhar44@gmail.com</div></div>
<div class="a" style="left:557px;top:324px;width:138px;height:20px;overflow:hidden"><div class="a" style="left:3.7px;top:0.5px;font-size:13.7px;letter-spacing:-0.16px;line-height:20px;color:#000;text-decoration-skip-ink:none;">#AlexaaeTerna#44</div></div>
<div class="a" style="left:695px;top:324px;width:101px;height:20px;overflow:hidden"><div class="a" style="left:3.7px;top:0.5px;font-size:13.7px;letter-spacing:-0.16px;line-height:20px;color:#000;text-decoration-skip-ink:none;">alexaaeterna44</div></div>
<div class="a" style="left:796px;top:324px;width:186px;height:20px;overflow:hidden"><div class="a" style="left:3.7px;top:0.5px;font-size:13.7px;letter-spacing:-0.16px;line-height:20px;color:#1155cc;text-decoration-skip-ink:none;text-decoration:underline">https://prnt.sc/JWlf31vaszv7</div></div>
<div class="a" style="left:982px;top:324px;width:372px;height:20px;overflow:hidden"><div class="a" style="left:3.7px;top:0.5px;font-size:13.7px;letter-spacing:-0.16px;line-height:20px;color:#1155cc;text-decoration-skip-ink:none;text-decoration:underline">https://alexaaeterna44.jiliblog.com/89993231/the-complete-guide</div></div>
<div class="a" style="left:46px;top:345px;width:122px;height:20px;overflow:hidden"><div class="a" style="left:3px;top:0.5px;font-size:13.7px;letter-spacing:-0.16px;line-height:20px;color:#000;text-decoration-skip-ink:none;">izrablog</div></div>
<div class="a" style="left:168px;top:345px;width:169px;height:21px;overflow:hidden"><div class="a" style="left:4px;top:0.3999999999999999px;font-size:13.33px;line-height:20px;color:#1155cc;text-decoration:underline;text-decoration-skip-ink:none;letter-spacing:-0.033px">izrablog.com</div></div>
<div class="a" style="left:337px;top:345px;width:220px;height:20px;overflow:hidden"><div class="a" style="left:3.7px;top:0.5px;font-size:13.7px;letter-spacing:-0.16px;line-height:20px;color:#000;text-decoration-skip-ink:none;">konasutradhar44@gmail.com</div></div>
<div class="a" style="left:557px;top:345px;width:138px;height:20px;overflow:hidden"><div class="a" style="left:3.7px;top:0.5px;font-size:13.7px;letter-spacing:-0.16px;line-height:20px;color:#000;text-decoration-skip-ink:none;">#AlexaaeTerna#44</div></div>
<div class="a" style="left:695px;top:345px;width:101px;height:20px;overflow:hidden"><div class="a" style="left:3.7px;top:0.5px;font-size:13.7px;letter-spacing:-0.16px;line-height:20px;color:#000;text-decoration-skip-ink:none;">alexaaeterna44</div></div>
<div class="a" style="left:796px;top:345px;width:186px;height:20px;overflow:hidden"><div class="a" style="left:3.7px;top:0.5px;font-size:13.7px;letter-spacing:-0.16px;line-height:20px;color:#1155cc;text-decoration-skip-ink:none;text-decoration:underline">https://prnt.sc/GIr4f5v5bf3Q</div></div>
<div class="a" style="left:982px;top:345px;width:372px;height:20px;overflow:hidden"><div class="a" style="left:3.7px;top:0.5px;font-size:13.7px;letter-spacing:-0.16px;line-height:20px;color:#1155cc;text-decoration-skip-ink:none;text-decoration:underline">https://alexaaeterna44.izrablog.com/33661015/the-complete-guide</div></div>
<div class="a" style="left:46px;top:366px;width:122px;height:20px;overflow:hidden"><div class="a" style="left:3px;top:0.5px;font-size:13.7px;letter-spacing:-0.16px;line-height:20px;color:#000;text-decoration-skip-ink:none;">blogvivi</div></div>
<div class="a" style="left:168px;top:366px;width:169px;height:21px;overflow:hidden"><div class="a" style="left:4px;top:-1.3px;font-size:13.33px;line-height:20px;color:#1155cc;text-decoration:underline;text-decoration-skip-ink:none;letter-spacing:0.205px">blogvivi.com</div></div>
<div class="a" style="left:337px;top:366px;width:220px;height:20px;overflow:hidden"><div class="a" style="left:3.7px;top:0.5px;font-size:13.7px;letter-spacing:-0.16px;line-height:20px;color:#000;text-decoration-skip-ink:none;">konasutradhar44@gmail.com</div></div>
<div class="a" style="left:557px;top:366px;width:138px;height:20px;overflow:hidden"><div class="a" style="left:3.7px;top:0.5px;font-size:13.7px;letter-spacing:-0.16px;line-height:20px;color:#000;text-decoration-skip-ink:none;">#AlexaaeTerna#44</div></div>
<div class="a" style="left:695px;top:366px;width:101px;height:20px;overflow:hidden"><div class="a" style="left:3.7px;top:0.5px;font-size:13.7px;letter-spacing:-0.16px;line-height:20px;color:#000;text-decoration-skip-ink:none;">alexaaeterna44</div></div>
<div class="a" style="left:796px;top:366px;width:186px;height:20px;overflow:hidden"><div class="a" style="left:3.7px;top:0.5px;font-size:13.7px;letter-spacing:-0.16px;line-height:20px;color:#1155cc;text-decoration-skip-ink:none;text-decoration:underline">https://prnt.sc/7FpJeHW-1VLc</div></div>
<div class="a" style="left:982px;top:366px;width:372px;height:20px;overflow:hidden"><div class="a" style="left:3.7px;top:0.5px;font-size:13.7px;letter-spacing:-0.16px;line-height:20px;color:#1155cc;text-decoration-skip-ink:none;text-decoration:underline">https://alexaaeterna44.blogvivi.com/33741399/the-complete-guide</div></div>
<div class="a" style="left:46px;top:387px;width:122px;height:20px;overflow:hidden"><div class="a" style="left:3px;top:0.5px;font-size:13.7px;letter-spacing:-0.16px;line-height:20px;color:#000;text-decoration-skip-ink:none;">blogolenta</div></div>
<div class="a" style="left:168px;top:387px;width:169px;height:21px;overflow:hidden"><div class="a" style="left:4px;top:-1.3px;font-size:13.33px;line-height:20px;color:#1155cc;text-decoration:underline;text-decoration-skip-ink:none;letter-spacing:0.292px">blogolenta.com</div></div>
<div class="a" style="left:337px;top:387px;width:220px;height:20px;overflow:hidden"><div class="a" style="left:3.7px;top:0.5px;font-size:13.7px;letter-spacing:-0.16px;line-height:20px;color:#000;text-decoration-skip-ink:none;">konasutradhar44@gmail.com</div></div>
<div class="a" style="left:557px;top:387px;width:138px;height:20px;overflow:hidden"><div class="a" style="left:3.7px;top:0.5px;font-size:13.7px;letter-spacing:-0.16px;line-height:20px;color:#000;text-decoration-skip-ink:none;">#AlexaaeTerna#44</div></div>
<div class="a" style="left:695px;top:387px;width:101px;height:20px;overflow:hidden"><div class="a" style="left:3.7px;top:0.5px;font-size:13.7px;letter-spacing:-0.16px;line-height:20px;color:#000;text-decoration-skip-ink:none;">alexaaeterna44</div></div>
<div class="a" style="left:796px;top:387px;width:186px;height:20px;overflow:hidden"><div class="a" style="left:3.7px;top:0.5px;font-size:13.7px;letter-spacing:-0.16px;line-height:20px;color:#1155cc;text-decoration-skip-ink:none;text-decoration:underline">https://prnt.sc/-gVJF6Apa9XC</div></div>
<div class="a" style="left:982px;top:387px;width:372px;height:20px;overflow:hidden"><div class="a" style="left:3.7px;top:0.5px;font-size:13.7px;letter-spacing:-0.16px;line-height:20px;color:#1155cc;text-decoration-skip-ink:none;text-decoration:underline">https://alexaaeterna44.blogolenta.com/30063983/the-complete-guide</div></div>
<div class="a" style="left:46px;top:408px;width:122px;height:20px;overflow:hidden"><div class="a" style="left:3px;top:0.5px;font-size:13.7px;letter-spacing:-0.16px;line-height:20px;color:#000;text-decoration-skip-ink:none;">dbblog</div></div>
<div class="a" style="left:168px;top:408px;width:169px;height:21px;overflow:hidden"><div class="a" style="left:4px;top:-1.3px;font-size:13.33px;line-height:20px;color:#1155cc;text-decoration:underline;text-decoration-skip-ink:none;letter-spacing:0.271px">dbblog.net</div></div>
<div class="a" style="left:337px;top:408px;width:220px;height:20px;overflow:hidden"><div class="a" style="left:3.7px;top:0.5px;font-size:13.7px;letter-spacing:-0.16px;line-height:20px;color:#000;text-decoration-skip-ink:none;">konasutradhar44@gmail.com</div></div>
<div class="a" style="left:557px;top:408px;width:138px;height:20px;overflow:hidden"><div class="a" style="left:3.7px;top:0.5px;font-size:13.7px;letter-spacing:-0.16px;line-height:20px;color:#000;text-decoration-skip-ink:none;">#AlexaaeTerna#44</div></div>
<div class="a" style="left:695px;top:408px;width:101px;height:20px;overflow:hidden"><div class="a" style="left:3.7px;top:0.5px;font-size:13.7px;letter-spacing:-0.16px;line-height:20px;color:#000;text-decoration-skip-ink:none;">alexaaeterna44</div></div>
<div class="a" style="left:796px;top:408px;width:186px;height:20px;overflow:hidden"><div class="a" style="left:3.7px;top:0.5px;font-size:13.7px;letter-spacing:-0.16px;line-height:20px;color:#1155cc;text-decoration-skip-ink:none;text-decoration:underline">https://prnt.sc/T8iC2Sz92WLz</div></div>
<div class="a" style="left:982px;top:408px;width:372px;height:20px;overflow:hidden"><div class="a" style="left:3.7px;top:0.5px;font-size:13.7px;letter-spacing:-0.16px;line-height:20px;color:#1155cc;text-decoration-skip-ink:none;text-decoration:underline">https://alexaaeterna44.dbblog.net/6462553/the-complete-guide-to</div></div>
<div class="a" style="left:46px;top:429px;width:122px;height:20px;overflow:hidden"><div class="a" style="left:3px;top:0.5px;font-size:13.7px;letter-spacing:-0.16px;line-height:20px;color:#000;text-decoration-skip-ink:none;">collectblogs</div></div>
<div class="a" style="left:168px;top:429px;width:169px;height:21px;overflow:hidden"><div class="a" style="left:4px;top:-1.3px;font-size:13.33px;line-height:20px;color:#1155cc;text-decoration:underline;text-decoration-skip-ink:none;letter-spacing:0.238px">collectblogs.com</div></div>
<div class="a" style="left:337px;top:429px;width:220px;height:20px;overflow:hidden"><div class="a" style="left:3.7px;top:0.5px;font-size:13.7px;letter-spacing:-0.16px;line-height:20px;color:#000;text-decoration-skip-ink:none;">konasutradhar44@gmail.com</div></div>
<div class="a" style="left:557px;top:429px;width:138px;height:20px;overflow:hidden"><div class="a" style="left:3.7px;top:0.5px;font-size:13.7px;letter-spacing:-0.16px;line-height:20px;color:#000;text-decoration-skip-ink:none;">#AlexaaeTerna#44</div></div>
<div class="a" style="left:695px;top:429px;width:101px;height:20px;overflow:hidden"><div class="a" style="left:3.7px;top:0.5px;font-size:13.7px;letter-spacing:-0.16px;line-height:20px;color:#000;text-decoration-skip-ink:none;">alexaaeterna44</div></div>
<div class="a" style="left:796px;top:429px;width:186px;height:20px;overflow:hidden"><div class="a" style="left:3.7px;top:0.5px;font-size:13.7px;letter-spacing:-0.16px;line-height:20px;color:#1155cc;text-decoration-skip-ink:none;text-decoration:underline">https://prnt.sc/5uvg7MrJ5VgM</div></div>
<div class="a" style="left:982px;top:429px;width:372px;height:20px;overflow:hidden"><div class="a" style="left:3.7px;top:0.5px;font-size:13.7px;letter-spacing:-0.16px;line-height:20px;color:#1155cc;text-decoration-skip-ink:none;text-decoration:underline">https://alexaaeterna44.collectblogs.com/78145585/the-complete-guide</div></div>
<div class="a" style="left:46px;top:450px;width:122px;height:20px;overflow:hidden"><div class="a" style="left:3px;top:0.5px;font-size:13.7px;letter-spacing:-0.16px;line-height:20px;color:#000;text-decoration-skip-ink:none;">thekatyblog</div></div>
<div class="a" style="left:168px;top:450px;width:169px;height:21px;overflow:hidden"><div class="a" style="left:4px;top:-1.3px;font-size:13.33px;line-height:20px;color:#1155cc;text-decoration:underline;text-decoration-skip-ink:none;letter-spacing:0.324px">thekatyblog.com</div></div>
<div class="a" style="left:337px;top:450px;width:220px;height:20px;overflow:hidden"><div class="a" style="left:3.7px;top:0.5px;font-size:13.7px;letter-spacing:-0.16px;line-height:20px;color:#000;text-decoration-skip-ink:none;">konasutradhar44@gmail.com</div></div>
<div class="a" style="left:557px;top:450px;width:138px;height:20px;overflow:hidden"><div class="a" style="left:3.7px;top:0.5px;font-size:13.7px;letter-spacing:-0.16px;line-height:20px;color:#000;text-decoration-skip-ink:none;">#AlexaaeTerna#44</div></div>
<div class="a" style="left:695px;top:450px;width:101px;height:20px;overflow:hidden"><div class="a" style="left:3.7px;top:0.5px;font-size:13.7px;letter-spacing:-0.16px;line-height:20px;color:#000;text-decoration-skip-ink:none;">alexaaeterna44</div></div>
<div class="a" style="left:796px;top:450px;width:186px;height:20px;overflow:hidden"><div class="a" style="left:3.7px;top:0.5px;font-size:13.7px;letter-spacing:-0.16px;line-height:20px;color:#1155cc;text-decoration-skip-ink:none;text-decoration:underline">https://prnt.sc/VfiZM9jE6xGw</div></div>
<div class="a" style="left:982px;top:450px;width:372px;height:20px;overflow:hidden"><div class="a" style="left:3.7px;top:0.5px;font-size:13.7px;letter-spacing:-0.16px;line-height:20px;color:#1155cc;text-decoration-skip-ink:none;text-decoration:underline">https://alexaaeterna44.thekatyblog.com/31957694/the-complete-guide</div></div>
<div class="a" style="left:46px;top:471px;width:122px;height:20px;overflow:hidden"><div class="a" style="left:3px;top:0.5px;font-size:13.7px;letter-spacing:-0.16px;line-height:20px;color:#000;text-decoration-skip-ink:none;">xzblogs</div></div>
<div class="a" style="left:168px;top:471px;width:169px;height:21px;overflow:hidden"><div class="a" style="left:4px;top:-1.3px;font-size:13.33px;line-height:20px;color:#1155cc;text-decoration:underline;text-decoration-skip-ink:none;letter-spacing:-0.009px">xzblogs.com</div></div>
<div class="a" style="left:337px;top:471px;width:220px;height:20px;overflow:hidden"><div class="a" style="left:3.7px;top:0.5px;font-size:13.7px;letter-spacing:-0.16px;line-height:20px;color:#000;text-decoration-skip-ink:none;">konasutradhar44@gmail.com</div></div>
<div class="a" style="left:557px;top:471px;width:138px;height:20px;overflow:hidden"><div class="a" style="left:3.7px;top:0.5px;font-size:13.7px;letter-spacing:-0.16px;line-height:20px;color:#000;text-decoration-skip-ink:none;">#AlexaaeTerna#44</div></div>
<div class="a" style="left:695px;top:471px;width:101px;height:20px;overflow:hidden"><div class="a" style="left:3.7px;top:0.5px;font-size:13.7px;letter-spacing:-0.16px;line-height:20px;color:#000;text-decoration-skip-ink:none;">alexaaeterna44</div></div>
<div class="a" style="left:796px;top:471px;width:186px;height:20px;overflow:hidden"><div class="a" style="left:3.7px;top:0.5px;font-size:13.7px;letter-spacing:-0.16px;line-height:20px;color:#1155cc;text-decoration-skip-ink:none;text-decoration:underline">https://prnt.sc/dqTLvqNdlUES</div></div>
<div class="a" style="left:982px;top:471px;width:372px;height:20px;overflow:hidden"><div class="a" style="left:3.7px;top:0.5px;font-size:13.7px;letter-spacing:-0.16px;line-height:20px;color:#1155cc;text-decoration-skip-ink:none;text-decoration:underline">https://alexaaeterna44.xzblogs.com/73990519/the-complete-guide</div></div>
<div class="a" style="left:46px;top:492px;width:122px;height:20px;overflow:hidden"><div class="a" style="left:3px;top:0.5px;font-size:13.7px;letter-spacing:-0.16px;line-height:20px;color:#000;text-decoration-skip-ink:none;">idblogz</div></div>
<div class="a" style="left:168px;top:492px;width:169px;height:21px;overflow:hidden"><div class="a" style="left:4px;top:-1.3px;font-size:13.33px;line-height:20px;color:#1155cc;text-decoration:underline;text-decoration-skip-ink:none;letter-spacing:0.187px">idblogz.com</div></div>
<div class="a" style="left:337px;top:492px;width:220px;height:20px;overflow:hidden"><div class="a" style="left:3.7px;top:0.5px;font-size:13.7px;letter-spacing:-0.16px;line-height:20px;color:#000;text-decoration-skip-ink:none;">konasutradhar44@gmail.com</div></div>
<div class="a" style="left:557px;top:492px;width:138px;height:20px;overflow:hidden"><div class="a" style="left:3.7px;top:0.5px;font-size:13.7px;letter-spacing:-0.16px;line-height:20px;color:#000;text-decoration-skip-ink:none;">#AlexaaeTerna#44</div></div>
<div class="a" style="left:695px;top:492px;width:101px;height:20px;overflow:hidden"><div class="a" style="left:3.7px;top:0.5px;font-size:13.7px;letter-spacing:-0.16px;line-height:20px;color:#000;text-decoration-skip-ink:none;">alexaaeterna44</div></div>
<div class="a" style="left:796px;top:492px;width:186px;height:20px;overflow:hidden"><div class="a" style="left:3.7px;top:0.5px;font-size:13.7px;letter-spacing:-0.16px;line-height:20px;color:#1155cc;text-decoration-skip-ink:none;text-decoration:underline">https://prnt.sc/C7RCXNj6ADP1</div></div>
<div class="a" style="left:982px;top:492px;width:372px;height:20px;overflow:hidden"><div class="a" style="left:3.7px;top:0.5px;font-size:13.7px;letter-spacing:-0.16px;line-height:20px;color:#1155cc;text-decoration-skip-ink:none;text-decoration:underline">https://alexaaeterna44.idblogz.com/33649820/the-complete-guide</div></div>
<div class="a" style="left:46px;top:513px;width:122px;height:20px;overflow:hidden"><div class="a" style="left:3px;top:0.5px;font-size:13.7px;letter-spacing:-0.16px;line-height:20px;color:#000;text-decoration-skip-ink:none;">blogaritma</div></div>
<div class="a" style="left:168px;top:513px;width:169px;height:21px;overflow:hidden"><div class="a" style="left:4px;top:-1.3px;font-size:13.33px;line-height:20px;color:#1155cc;text-decoration:underline;text-decoration-skip-ink:none;letter-spacing:0.429px">blogaritma.com</div></div>
<div class="a" style="left:337px;top:513px;width:220px;height:20px;overflow:hidden"><div class="a" style="left:3.7px;top:0.5px;font-size:13.7px;letter-spacing:-0.16px;line-height:20px;color:#000;text-decoration-skip-ink:none;">konasutradhar44@gmail.com</div></div>
<div class="a" style="left:557px;top:513px;width:138px;height:20px;overflow:hidden"><div class="a" style="left:3.7px;top:0.5px;font-size:13.7px;letter-spacing:-0.16px;line-height:20px;color:#000;text-decoration-skip-ink:none;">#AlexaaeTerna#44</div></div>
<div class="a" style="left:695px;top:513px;width:101px;height:20px;overflow:hidden"><div class="a" style="left:3.7px;top:0.5px;font-size:13.7px;letter-spacing:-0.16px;line-height:20px;color:#000;text-decoration-skip-ink:none;">alexaaeterna44</div></div>
<div class="a" style="left:796px;top:513px;width:186px;height:20px;overflow:hidden"><div class="a" style="left:3.7px;top:0.5px;font-size:13.7px;letter-spacing:-0.16px;line-height:20px;color:#1155cc;text-decoration-skip-ink:none;text-decoration:underline">https://prnt.sc/EDpQNyEe_Ai9</div></div>
<div class="a" style="left:982px;top:513px;width:372px;height:20px;overflow:hidden"><div class="a" style="left:3.7px;top:0.5px;font-size:13.7px;letter-spacing:-0.16px;line-height:20px;color:#1155cc;text-decoration-skip-ink:none;text-decoration:underline">https://alexaaeterna44.blogaritma.com/31481318/the-complete-guide</div></div>
<div class="a" style="left:46px;top:534px;width:122px;height:20px;overflow:hidden"><div class="a" style="left:3px;top:0.5px;font-size:13.7px;letter-spacing:-0.16px;line-height:20px;color:#000;text-decoration-skip-ink:none;">bloggosite</div></div>
<div class="a" style="left:168px;top:534px;width:169px;height:21px;overflow:hidden"><div class="a" style="left:4px;top:-1.3px;font-size:13.33px;line-height:20px;color:#1155cc;text-decoration:underline;text-decoration-skip-ink:none;letter-spacing:0.455px">https://bloggosite.com/</div></div>
<div class="a" style="left:337px;top:534px;width:220px;height:20px;overflow:hidden"><div class="a" style="left:3.7px;top:0.5px;font-size:13.7px;letter-spacing:-0.16px;line-height:20px;color:#000;text-decoration-skip-ink:none;">konasutradhar44@gmail.com</div></div>
<div class="a" style="left:557px;top:534px;width:138px;height:20px;overflow:hidden"><div class="a" style="left:3.7px;top:0.5px;font-size:13.7px;letter-spacing:-0.16px;line-height:20px;color:#000;text-decoration-skip-ink:none;">#AlexaaeTerna#44</div></div>
<div class="a" style="left:695px;top:534px;width:101px;height:20px;overflow:hidden"><div class="a" style="left:3.7px;top:0.5px;font-size:13.7px;letter-spacing:-0.16px;line-height:20px;color:#000;text-decoration-skip-ink:none;">alexaaeterna44</div></div>
<div class="a" style="left:796px;top:534px;width:186px;height:20px;overflow:hidden"><div class="a" style="left:3.7px;top:0.5px;font-size:13.7px;letter-spacing:-0.16px;line-height:20px;color:#1155cc;text-decoration-skip-ink:none;text-decoration:underline">https://prnt.sc/QAKlYnoLCD8w</div></div>
<div class="a" style="left:982px;top:534px;width:372px;height:20px;overflow:hidden"><div class="a" style="left:3.7px;top:0.5px;font-size:13.7px;letter-spacing:-0.16px;line-height:20px;color:#1155cc;text-decoration-skip-ink:none;text-decoration:underline">https://alexaaeterna44.bloggosite.com/39959594/the-complete-guide</div></div>
<div class="a" style="left:46px;top:555px;width:122px;height:20px;overflow:hidden"><div class="a" style="left:3px;top:0.5px;font-size:13.7px;letter-spacing:-0.16px;line-height:20px;color:#000;text-decoration-skip-ink:none;">blogdomago</div></div>
<div class="a" style="left:168px;top:555px;width:169px;height:21px;overflow:hidden"><div class="a" style="left:4px;top:-1.3px;font-size:13.33px;line-height:20px;color:#1155cc;text-decoration:underline;text-decoration-skip-ink:none;letter-spacing:0.574px">https://blogdomago.com/</div></div>
<div class="a" style="left:337px;top:555px;width:220px;height:20px;overflow:hidden"><div class="a" style="left:3.7px;top:0.5px;font-size:13.7px;letter-spacing:-0.16px;line-height:20px;color:#000;text-decoration-skip-ink:none;">konasutradhar44@gmail.com</div></div>
<div class="a" style="left:557px;top:555px;width:138px;height:20px;overflow:hidden"><div class="a" style="left:3.7px;top:0.5px;font-size:13.7px;letter-spacing:-0.16px;line-height:20px;color:#000;text-decoration-skip-ink:none;">#AlexaaeTerna#44</div></div>
<div class="a" style="left:695px;top:555px;width:101px;height:20px;overflow:hidden"><div class="a" style="left:3.7px;top:0.5px;font-size:13.7px;letter-spacing:-0.16px;line-height:20px;color:#000;text-decoration-skip-ink:none;">alexaaeterna44</div></div>
<div class="a" style="left:796px;top:555px;width:186px;height:20px;overflow:hidden"><div class="a" style="left:3.7px;top:0.5px;font-size:13.7px;letter-spacing:-0.16px;line-height:20px;color:#1155cc;text-decoration-skip-ink:none;text-decoration:underline">https://prnt.sc/3qiltjoS0Eui</div></div>
<div class="a" style="left:982px;top:555px;width:372px;height:20px;overflow:hidden"><div class="a" style="left:3.7px;top:0.5px;font-size:13.7px;letter-spacing:-0.16px;line-height:20px;color:#1155cc;text-decoration-skip-ink:none;text-decoration:underline">https://alexaaeterna44.blogdomago.com/32096679/the-complete-guide</div></div>
<div class="a" style="left:46px;top:576px;width:122px;height:20px;overflow:hidden"><div class="a" style="left:3px;top:0.5px;font-size:13.7px;letter-spacing:-0.16px;line-height:20px;color:#000;text-decoration-skip-ink:none;">theideasblog</div></div>
<div class="a" style="left:168px;top:576px;width:169px;height:21px;overflow:hidden"><div class="a" style="left:4px;top:-1.3px;font-size:13.33px;line-height:20px;color:#1155cc;text-decoration:underline;text-decoration-skip-ink:none;letter-spacing:0.462px">https://theideasblog.com/</div></div>
<div class="a" style="left:337px;top:576px;width:220px;height:20px;overflow:hidden"><div class="a" style="left:3.7px;top:0.5px;font-size:13.7px;letter-spacing:-0.16px;line-height:20px;color:#000;text-decoration-skip-ink:none;">konasutradhar44@gmail.com</div></div>
<div class="a" style="left:557px;top:576px;width:138px;height:20px;overflow:hidden"><div class="a" style="left:3.7px;top:0.5px;font-size:13.7px;letter-spacing:-0.16px;line-height:20px;color:#000;text-decoration-skip-ink:none;">#AlexaaeTerna#44</div></div>
<div class="a" style="left:695px;top:576px;width:101px;height:20px;overflow:hidden"><div class="a" style="left:3.7px;top:0.5px;font-size:13.7px;letter-spacing:-0.16px;line-height:20px;color:#000;text-decoration-skip-ink:none;">alexaaeterna44</div></div>
<div class="a" style="left:796px;top:576px;width:186px;height:20px;overflow:hidden"><div class="a" style="left:3.7px;top:0.5px;font-size:13.7px;letter-spacing:-0.16px;line-height:20px;color:#1155cc;text-decoration-skip-ink:none;text-decoration:underline">https://prnt.sc/XX63BG921nzt</div></div>
<div class="a" style="left:982px;top:576px;width:372px;height:20px;overflow:hidden"><div class="a" style="left:3.7px;top:0.5px;font-size:13.7px;letter-spacing:-0.16px;line-height:20px;color:#1155cc;text-decoration-skip-ink:none;text-decoration:underline">https://alexaaeterna44.theideasblog.com/33618159/the-complete-guide</div></div>
<div class="a" style="left:338px;top:225px;width:85px;height:361px;background:rgba(255,255,255,0.74);"></div>
<div class="a" style="left:568px;top:225px;width:86px;height:361px;background:rgba(255,255,255,0.74);"></div>
<div class="a" style="left:683px;top:225px;width:85px;height:361px;background:rgba(255,255,255,0.74);"></div>
<div class="a" style="left:1015px;top:225px;width:85px;height:361px;background:rgba(255,255,255,0.74);"></div>
<div class="a" style="left:0px;top:592px;width:1354px;height:12px;background:#ffffff;"></div>
<div class="a" style="left:0px;top:592px;width:45px;height:12px;background:#f8f9fa;"></div>
<div class="a" style="left:45px;top:592px;width:1px;height:12px;background:#c7c7c7;"></div>
<div class="a" style="left:0px;top:592px;width:1365px;height:1px;background:#e1e1e1;"></div>
<div class="a" style="left:48px;top:594px;width:539px;height:9px;background:#dadce0;border-radius:5px"></div>
<div class="a" style="left:0px;top:604px;width:1365px;height:2px;background:#e8eaed;"></div>
<div class="a" style="left:1354px;top:560px;width:11px;height:32px;background:#f8f9fa;"></div>
<div class="a" style="left:1354px;top:560px;width:11px;height:1px;background:#e1e1e1;"></div>
<div class="a" style="left:1354px;top:576px;width:11px;height:1px;background:#e1e1e1;"></div>
<svg class="a" style="left:1357px;top:566px" width="6" height="4" viewBox="0 0 6 4"><path d="M0 4h6L3 0z" fill="#9a9a9a"/></svg>
<svg class="a" style="left:1357px;top:583px" width="6" height="4" viewBox="0 0 6 4"><path d="M0 0h6L3 4z" fill="#9a9a9a"/></svg>
<div class="a" style="left:1323px;top:593px;width:42px;height:11px;background:#f8f9fa;"></div>
<div class="a" style="left:1323px;top:593px;width:1px;height:11px;background:#e1e1e1;"></div>
<div class="a" style="left:1339px;top:593px;width:1px;height:11px;background:#e1e1e1;"></div>
<div class="a" style="left:1354px;top:593px;width:1px;height:11px;background:#e1e1e1;"></div>
<svg class="a" style="left:1329px;top:596px" width="4" height="6" viewBox="0 0 4 6"><path d="M4 0v6L0 3z" fill="#9a9a9a"/></svg>
<svg class="a" style="left:1345px;top:596px" width="4" height="6" viewBox="0 0 4 6"><path d="M0 0v6L4 3z" fill="#9a9a9a"/></svg>
<div class="a" style="left:0px;top:605px;width:1365px;height:37px;background:#f9fbfd;"></div>
<div class="a" style="left:56.8px;top:624.2px;width:10.2px;height:2px;background:#5f6368;"></div>
<div class="a" style="left:60.9px;top:620px;width:2px;height:10.4px;background:#5f6368;"></div>
<div class="a" style="left:95px;top:620.2px;width:14px;height:1.7px;background:#4a4d50;"></div>
<div class="a" style="left:95px;top:624.1px;width:14px;height:1.7px;background:#4a4d50;"></div>
<div class="a" style="left:95px;top:628px;width:14px;height:1.7px;background:#4a4d50;"></div>
<div class="a" style="left:134px;top:606px;width:168px;height:36px;background:#e1e9f7;"></div>
<div class="a" style="left:146px;top:616.08px;font-size:14.2px;line-height:18px;color:#0b57d0;font-weight:normal;letter-spacing:0.95px;-webkit-text-stroke:0.55px #0b57d0">web 2.0 Backlink</div>
<svg class="a" style="left:281px;top:622px" width="10" height="6" viewBox="0 0 10 6"><path d="M0.5 0.5h9L5 5z" fill="#0b57d0"/></svg>
<div class="a" style="left:314px;top:616.08px;font-size:14.2px;line-height:18px;color:#444746;font-weight:normal;letter-spacing:0.62px;-webkit-text-stroke:0.2px #444746">Profile Backlinks</div>
<svg class="a" style="left:439px;top:622px" width="10" height="6" viewBox="0 0 10 6"><path d="M0.5 0.5h9L5 5z" fill="#444746"/></svg>
<div class="a" style="left:473.5px;top:616.08px;font-size:14.2px;line-height:18px;color:#444746;font-weight:normal;letter-spacing:0.62px;-webkit-text-stroke:0.2px #444746">DoFollow links</div>
<svg class="a" style="left:583px;top:622px" width="10" height="6" viewBox="0 0 10 6"><path d="M0.5 0.5h9L5 5z" fill="#444746"/></svg>
<div class="a" style="left:617px;top:616.08px;font-size:14.2px;line-height:18px;color:#444746;font-weight:normal;letter-spacing:0.62px;-webkit-text-stroke:0.2px #444746">NoFollow links</div>
<svg class="a" style="left:726px;top:622px" width="10" height="6" viewBox="0 0 10 6"><path d="M0.5 0.5h9L5 5z" fill="#444746"/></svg>
<div class="a" style="left:760px;top:616.08px;font-size:14.2px;line-height:18px;color:#444746;font-weight:normal;letter-spacing:0.62px;-webkit-text-stroke:0.2px #444746">Client No 6</div>
<svg class="a" style="left:846px;top:622px" width="10" height="6" viewBox="0 0 10 6"><path d="M0.5 0.5h9L5 5z" fill="#444746"/></svg>
<div class="a" style="left:880px;top:616.08px;font-size:14.2px;line-height:18px;color:#444746;font-weight:normal;letter-spacing:0.62px;-webkit-text-stroke:0.2px #444746">Client No 5</div>
<svg class="a" style="left:966px;top:622px" width="10" height="6" viewBox="0 0 10 6"><path d="M0.5 0.5h9L5 5z" fill="#444746"/></svg>
<div class="a" style="left:1001px;top:616.08px;font-size:14.2px;line-height:18px;color:#444746;font-weight:normal;letter-spacing:0.62px;-webkit-text-stroke:0.2px #444746">Client No 7</div>
<svg class="a" style="left:1087px;top:622px" width="10" height="6" viewBox="0 0 10 6"><path d="M0.5 0.5h9L5 5z" fill="#444746"/></svg>
<svg class="a" style="left:1331px;top:618px" width="14" height="16" viewBox="0 0 14 16"><path d="M9.5 3L4.5 8l5 5" fill="none" stroke="#444746" stroke-width="1.6"/></svg>
<div class="a" style="left:0px;top:642px;width:1365px;height:3px;background:#1c1c1c;"></div>
<div class="a" style="left:48px;top:642px;width:287px;height:3px;background:#3a3a3a;"></div>
<div class="a" style="left:801px;top:642px;width:45px;height:3px;background:#b8621d;"></div>
<div class="a" style="left:1073px;top:642px;width:23px;height:3px;background:#3a3a3a;"></div>
</body></html>
